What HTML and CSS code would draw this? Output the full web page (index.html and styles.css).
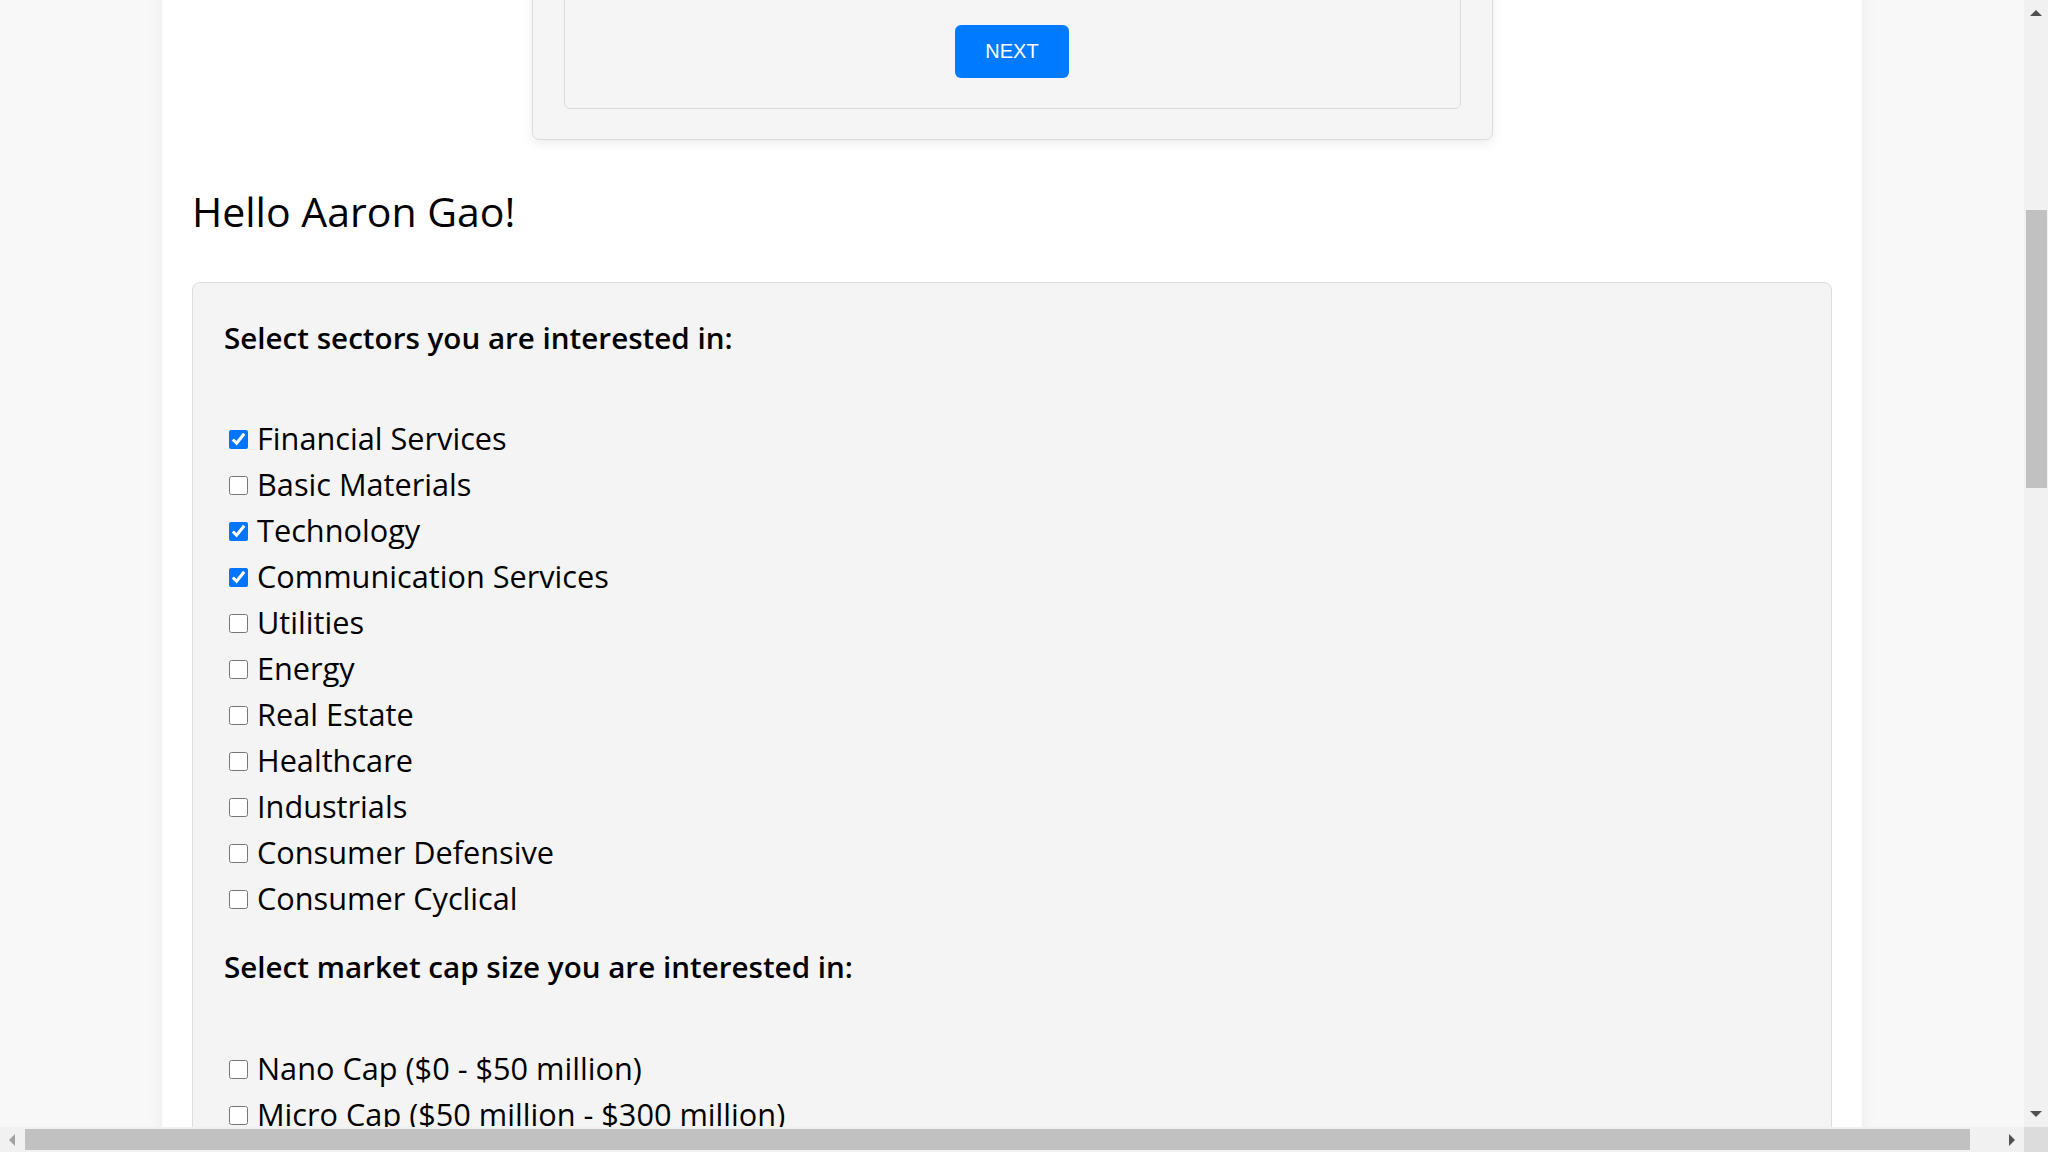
FILE: index.html
```html
<!DOCTYPE html>
<html lang="en">
<head>
<meta charset="utf-8">
<title>Preferences</title>
<link rel="stylesheet" href="styles.css">
</head>
<body>
<div class="frame">
  <main class="viewport">
    <div class="container">
      <div class="top-card">
        <div class="top-inner">
          <button class="btn-next" type="button">NEXT</button>
        </div>
      </div>
      <h1 class="greeting">Hello Aaron Gao!</h1>
      <section class="pref-card">
        <h5 class="pref-title">Select sectors you are interested in:</h5>
        <ul class="opt-list">
          <li><label><input type="checkbox" checked> Financial Services</label></li>
          <li><label><input type="checkbox"> Basic Materials</label></li>
          <li><label><input type="checkbox" checked> Technology</label></li>
          <li><label><input type="checkbox" checked> Communication Services</label></li>
          <li><label><input type="checkbox"> Utilities</label></li>
          <li><label><input type="checkbox"> Energy</label></li>
          <li><label><input type="checkbox"> Real Estate</label></li>
          <li><label><input type="checkbox"> Healthcare</label></li>
          <li><label><input type="checkbox"> Industrials</label></li>
          <li><label><input type="checkbox"> Consumer Defensive</label></li>
          <li><label><input type="checkbox"> Consumer Cyclical</label></li>
        </ul>
        <h5 class="pref-title second">Select market cap size you are interested in:</h5>
        <ul class="opt-list">
          <li><label><input type="checkbox"> Nano Cap ($0 - $50 million)</label></li>
          <li><label><input type="checkbox"> Micro Cap ($50 million - $300 million)</label></li>
          <li><label><input type="checkbox"> Small Cap ($300 million - $2 billion)</label></li>
          <li><label><input type="checkbox"> Mid Cap ($2 billion - $10 billion)</label></li>
        </ul>
      </section>
    </div>
  </main>
  <div class="vscroll">
    <div class="arrow arrow-up"></div>
    <div class="vtrack"><div class="vthumb"></div></div>
    <div class="arrow arrow-down"></div>
  </div>
  <div class="hscroll">
    <div class="harrow arrow-left"></div>
    <div class="htrack"><div class="hthumb"></div></div>
    <div class="harrow arrow-right"></div>
  </div>
  <div class="corner"></div>
</div>
</body>
</html>
```

FILE: styles.css
```css
html, body {
  margin: 0;
  padding: 0;
  height: 100%;
  overflow: hidden;
}

body {
  font-family: "Open Sans", "Noto Sans", sans-serif;
  color: #000;
}

.frame {
  display: grid;
  grid-template-columns: 1fr 24px;
  grid-template-rows: 1fr 25px;
  width: 100vw;
  height: 100vh;
}

.viewport {
  overflow: hidden;
  background: #f8f8f8;
}

.container {
  width: 1700px;
  margin: 0 auto;
  box-sizing: border-box;
  padding: 0 30px 40px;
  background: #fff;
  min-height: 1400px;
  box-shadow: 0 0 16px rgba(0, 0, 0, 0.06);
}

.top-card {
  width: 961px;
  box-sizing: border-box;
  margin: -62px auto 0;
  padding: 30px 31px 30px;
  background: #f5f5f5;
  border: 1px solid #dcdcdc;
  border-radius: 7px;
  box-shadow: 0 4px 12px rgba(0, 0, 0, 0.07);
}

.top-inner {
  display: flex;
  justify-content: center;
  padding: 55px 0 30px;
  border: 1px solid #dcdcdc;
  border-radius: 6px;
  background: #f5f5f5;
}

.btn-next {
  font-family: "Liberation Sans", Arial, sans-serif;
  font-size: 20px;
  color: #fff;
  background: #007bff;
  border: none;
  border-radius: 6px;
  width: 114px;
  height: 53px;
  padding: 0;
}

.greeting {
  font-size: 41px;
  font-weight: 400;
  line-height: 48px;
  margin: 47px 0 47px;
}

.pref-card {
  background: #f4f4f4;
  border: 1px solid #dedede;
  border-radius: 8px;
  padding: 31.5px 31px 40px;
}

.pref-title {
  font-size: 29.6px;
  font-weight: 600;
  line-height: 46px;
  margin: 0 0 54.5px;
}

.pref-title.second {
  margin-top: 23px;
  margin-bottom: 54.5px;
}

.opt-list {
  list-style: none;
  margin: 0;
  padding: 0;
}

.opt-list li {
  font-size: 30.7px;
  line-height: 46px;
  height: 46px;
}

.opt-list label {
  display: flex;
  align-items: center;
  gap: 9px;
}

.opt-list input {
  width: 19px;
  height: 19px;
  margin: 3px 0 0 5px;
  accent-color: #0075ff;
}

.vscroll {
  background: #f1f1f1;
  display: flex;
  flex-direction: column;
}

.vtrack {
  flex: 1;
  padding: 184px 1px 0 2px;
}

.vthumb {
  height: 278px;
  background: #c1c1c1;
}

.arrow {
  height: 26px;
  display: flex;
  justify-content: center;
  align-items: center;
}

.arrow-up::before {
  content: "";
  border-left: 6px solid transparent;
  border-right: 6px solid transparent;
  border-bottom: 6px solid #505050;
}

.arrow-down::before {
  content: "";
  border-left: 6px solid transparent;
  border-right: 6px solid transparent;
  border-top: 6px solid #505050;
}

.hscroll {
  background: #f1f1f1;
  display: flex;
}

.htrack {
  flex: 1;
  padding: 2px 0 2px 1px;
}

.hthumb {
  width: 1945px;
  height: 21px;
  background: #c1c1c1;
}

.harrow {
  width: 24px;
  display: flex;
  justify-content: center;
  align-items: center;
}

.arrow-left::before {
  content: "";
  border-top: 6px solid transparent;
  border-bottom: 6px solid transparent;
  border-right: 6px solid #a3a3a3;
}

.arrow-right::before {
  content: "";
  border-top: 6px solid transparent;
  border-bottom: 6px solid transparent;
  border-left: 6px solid #505050;
}

.corner {
  background: #dcdcdc;
}
```
